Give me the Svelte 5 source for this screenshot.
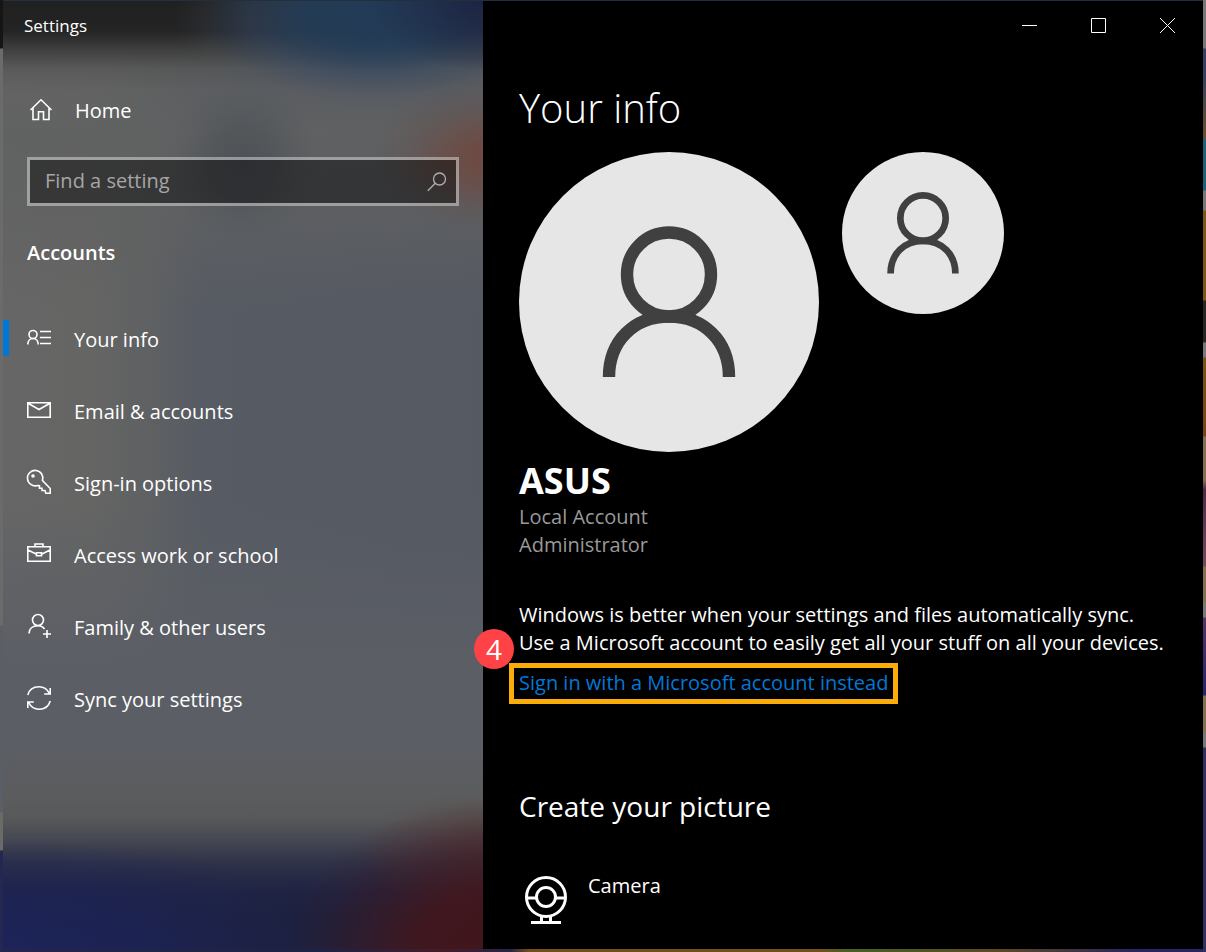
<script lang="ts">
  type NavItem = { id: string; label: string };

  const items: NavItem[] = [
    { id: 'info', label: 'Your info' },
    { id: 'email', label: 'Email & accounts' },
    { id: 'signin', label: 'Sign-in options' },
    { id: 'work', label: 'Access work or school' },
    { id: 'family', label: 'Family & other users' },
    { id: 'sync', label: 'Sync your settings' }
  ];

  let selected = $state('info');
  let query = $state('');
</script>

{#snippet avatar()}
  <svg viewBox="0 0 300 300" fill="none" stroke="#404040" stroke-width="12.4" aria-hidden="true">
    <circle cx="150" cy="122.500" r="42" />
    <path d="M90 225c0-36 25-60.500 60-60.500s60 24.500 60 60.500" />
  </svg>
{/snippet}

<div class="desktop">
  <div class="window">
    <aside class="sidebar">
      <div class="caption">Settings</div>

      <a class="home" href="#home">
        <svg width="24" height="24" viewBox="0 0 24 24" aria-hidden="true">
          <path d="M1.500 12 12 1.800 22.500 12M4 9.800v11.700h5.500v-7.700h5v7.700H20V9.800" />
        </svg>
        <span>Home</span>
      </a>

      <label class="search">
        <input type="text" placeholder="Find a setting" aria-label="Find a setting" bind:value={query} />
        <svg width="20" height="20" viewBox="0 0 20 20" aria-hidden="true">
          <circle cx="12.500" cy="7" r="6" />
          <path d="M8.300 11.300.8 18.800" />
        </svg>
      </label>

      <h2>Accounts</h2>

      <nav>
        {#each items as item}
          <a
            href={`#${item.id}`}
            class:selected={selected === item.id}
            onclick={() => (selected = item.id)}
          >
            <svg width="24" height="24" viewBox="0 0 24 24" aria-hidden="true">
              {#if item.id === 'info'}
                <circle cx="6" cy="8.500" r="4" />
                <path d="M.8 18.500c0-3.500 2-6 5.200-6s5.200 2.500 5.200 6M13 5.500h11M13 11.500h11M13 17.500h11" />
              {:else if item.id === 'email'}
                <path d="M.8 4.800h22.400v14.400H.8zM1 5.300l11 6.200 11-6.200" />
              {:else if item.id === 'signin'}
                <path d="M15.500 10.500A7.700 7.700 0 1 0 10.300 15.500L12.500 15.800V18.300H15V20.500H18L18.800 23.200H23.200V18.500Z" />
                <circle cx="6" cy="6" r="1" />
              {:else if item.id === 'work'}
                <path d="M.8 4.800h22.400v14.400H.8zM8 4.500V2h8v2.500M1 8l8.500 4.300M23 8l-8.500 4.300M9.500 10.800h5v3h-5z" />
              {:else if item.id === 'family'}
                <circle cx="11" cy="6" r="5.500" />
                <path d="M2 19.500c0-4.800 3.500-7.800 9-7.800 3 0 5.200 1.200 6.500 3.300M20 16v8M16 20h8" />
              {:else}
                <path d="M.8 9C2.200 3.700 6.500.8 12 .8c4.500 0 8.300 2.500 10.300 6.700M23.200 2v6h-6M23.200 15c-1.400 5.300-5.700 8.200-11.200 8.200-4.500 0-8.300-2.500-10.300-6.700M.8 22v-6h6" />
              {/if}
            </svg>
            <span>{item.label}</span>
          </a>
        {/each}
      </nav>
    </aside>

    <main>
      <div class="controls">
        <button type="button" aria-label="Minimize">
          <svg width="15" height="15" viewBox="0 0 15 15"><path d="M0 7.500h15" /></svg>
        </button>
        <button type="button" aria-label="Maximize">
          <svg width="15" height="15" viewBox="0 0 15 15"><path d="M.5.5h14v14H.5z" /></svg>
        </button>
        <button type="button" aria-label="Close">
          <svg width="15" height="15" viewBox="0 0 15 15"><path d="m0 0 15 15M15 0 0 15" /></svg>
        </button>
      </div>

      <div class="content">
        <h1>Your info</h1>

        <div class="pictures">
          <div class="avatar large">{@render avatar()}</div>
          <div class="avatar small">{@render avatar()}</div>
        </div>

        <div class="name">ASUS</div>
        <div class="role">Local Account</div>
        <div class="role">Administrator</div>

        <p>
          Windows is better when your settings and files automatically sync.<br />
          Use a Microsoft account to easily get all your stuff on all your devices.
        </p>

        <div class="callout">
          <span class="step">4</span>
          <a href="#microsoft">Sign in with a Microsoft account instead</a>
        </div>

        <h3>Create your picture</h3>

        <button type="button" class="camera">
          <svg width="44" height="50" viewBox="0 0 44 50" aria-hidden="true">
            <circle cx="22" cy="22" r="19.500" />
            <circle cx="22" cy="22" r="9.500" />
            <path d="M2.500 23h10M31.500 23h10M17.500 41v6M26.500 41v6M7 47.500h30" />
          </svg>
          <span>Camera</span>
        </button>
      </div>
    </main>
  </div>
</div>

<style>
  :global(body) {
    margin: 0;
    background: #000;
  }

  /* Slivers of the desktop show around the window */
  .desktop {
    box-sizing: border-box;
    min-height: 100vh;
    padding: 1px 3px 3px;
    display: flex;
    font-family: 'Segoe UI', 'Open Sans', 'Noto Sans', sans-serif;
    font-size: 20px;
    line-height: 28px;
    color: #fff;
    background:
      linear-gradient(#151515 0 48px, #6b6b6b 49px 625px, #5a5e66 626px 812px, #6b6b65 813px 850px, #242850 851px) left / 3px 100% no-repeat,
      linear-gradient(#777 0 48px, #33405f 49px 75px, #6b4e2c 138px, #1d6178 140px 190px, #777 191px 210px, #7c5814 211px 300px, #292521 301px 342px, #777 343px 357px, #79550d 358px, #7b4214 436px, #83704e 437px 480px, #4b2b46 490px, #744b5e 566px, #83704e 567px 602px, #777 603px 617px, #553267 618px, #29236b 695px, #83704e 696px 732px, #777 733px 747px, #312e61 748px) right / 3px 100% no-repeat,
      linear-gradient(90deg, #24264b, #1d2344 320px, #461c28 440px, #282345 510px, #745016 530px 820px, #48601f 850px, #5d4823 1000px, #282361 1140px) bottom / 100% 3px no-repeat,
      #22303e;
  }

  .window {
    flex: 1;
    display: grid;
    grid-template-columns: minmax(300px, 480px) 1fr;
    background: #000;
  }

  /* Blurred backdrop: colour patches over horizontal bands over the grey base */
  .sidebar {
    background:
      radial-gradient(ellipse 120px 75px at 102% 156px, #70483f, #6e483fb0 35%, #6a494240 68%, #6a494200),
      radial-gradient(ellipse 75px 80px at 240px 160px, #454b51a0, #454b5170 40%, #454b5120 75%, #454b5100),
      radial-gradient(ellipse 110px 70px at 100% 0, #1c2444, #1c244480 50%, #1c244400),
      radial-gradient(ellipse 200px 95px at 370px 15px, #213a56, #253f5be0 35%, #34486588 62%, #46526528 85%, #46526500),
      linear-gradient(#202020, #242424 30px, #404140 50px, #555655c0 68px, #5f605f60 90px, #5f605f00 120px),
      radial-gradient(ellipse 220px 150px at 105% 100%, #41151b, #42171df0 40%, #3b1a23a8 62%, #3b1a2330 85%, #3b1a2300),
      radial-gradient(ellipse 340px 110px at 0 100%, #1c2459, #1c2459c0 40%, #1c245940 80%, #1c245900),
      radial-gradient(ellipse 150px 60px at 105% 850px, #604039b0, #60403960 50%, #60403900),
      linear-gradient(#5b5c5d00 745px, #5b5c5d 795px, #57585a 818px, #444652 840px, #2f3248 862px, #202342 890px, #1d203c 920px),
      linear-gradient(#5b5e6500 500px, #5b5e6590 590px, #5b5e65 670px),
      linear-gradient(#60616100 70px, #606161e0 130px, #60616190 220px, #60616100 310px),
      linear-gradient(90deg, #666, #656564 90px, #5f6162 140px, #575b63 200px, #555962);
  }

  .caption {
    height: 50px;
    padding-left: 21px;
    font-size: 17px;
    line-height: 50px;
  }

  a {
    color: inherit;
    text-decoration: none;
  }

  .sidebar svg {
    flex: none;
    fill: none;
    stroke: currentColor;
    stroke-width: 1.6;
    overflow: visible;
  }

  .home {
    height: 72px;
    margin-top: 23px;
    padding-left: 26px;
    display: flex;
    align-items: center;
    gap: 22px;
  }

  .search {
    box-sizing: border-box;
    height: 49px;
    margin: 11px 24px 0;
    padding: 0 9px 0 15px;
    display: flex;
    align-items: center;
    border: 3px solid #ffffff66;
    background: #00000070;
    background-clip: padding-box;
    color: #b0b0b0;
  }

  .search input {
    flex: 1;
    min-width: 0;
    padding: 0 0 2px;
    border: 0;
    outline: 0;
    background: transparent;
    font: inherit;
    color: #fff;
  }

  .search input::placeholder {
    color: #a6a6a6;
    opacity: 1;
  }

  .search svg {
    stroke-width: 1.3;
  }

  h2 {
    margin: 33px 24px 0;
    font-size: 20px;
    font-weight: 600;
    line-height: 28px;
  }

  nav {
    margin-top: 35px;
  }

  nav a {
    height: 72px;
    display: flex;
    align-items: center;
    gap: 23px;
    padding-left: 24px;
  }

  .home span {
    padding-top: 2px;
  }

  nav span {
    padding-top: 4px;
  }

  nav a.selected {
    padding-left: 0;
  }

  nav a.selected::before {
    content: '';
    width: 6px;
    height: 36px;
    margin-right: -5px;
    background: #0078d7;
  }

  main {
    min-width: 0;
  }

  .controls {
    height: 49px;
    display: flex;
    justify-content: flex-end;
    padding-right: 1px;
  }

  button {
    border: 0;
    padding: 0;
    background: transparent;
    color: inherit;
    font: inherit;
  }

  .controls button {
    width: 69px;
    display: flex;
    align-items: center;
    justify-content: center;
  }

  .controls svg {
    fill: none;
    stroke: #fff;
    stroke-width: 1;
  }

  .content {
    padding: 30px 36px 20px;
  }

  h1 {
    margin: 0;
    font-size: 40px;
    font-weight: 300;
    line-height: 56px;
  }

  .pictures {
    margin-top: 16px;
    display: flex;
    align-items: flex-start;
    gap: 23px;
  }

  .avatar {
    overflow: hidden;
    border-radius: 50%;
    background: #e6e6e6;
  }

  .avatar svg {
    display: block;
  }

  .large {
    width: 300px;
    height: 300px;
  }

  .small {
    width: 162px;
    height: 162px;
  }

  .name {
    margin-top: 6px;
    font-size: 36px;
    font-weight: 700;
    line-height: 45px;
  }

  .role {
    color: #999;
  }

  p {
    margin: 42px 0 0;
  }

  .callout {
    position: relative;
    width: fit-content;
    margin: 6px 0 0 -10px;
    padding: 1px 5px 2px;
    border: 5px solid #faac09;
    color: #0078d7;
  }

  .callout a {
    display: block;
  }

  .step {
    position: absolute;
    left: -40px;
    top: -39px;
    width: 40px;
    height: 40px;
    border-radius: 50%;
    background: #ff4245;
    color: #fff;
    font-size: 28px;
    line-height: 40px;
    text-align: center;
  }

  h3 {
    margin: 83px 0 0;
    font-size: 28px;
    font-weight: 400;
    line-height: 38px;
  }

  .camera {
    margin: 47px 0 0 5px;
    display: flex;
    align-items: flex-start;
    gap: 20px;
  }

  .camera svg {
    margin-top: 3px;
    fill: none;
    stroke: #fff;
    stroke-width: 3;
  }
</style>
